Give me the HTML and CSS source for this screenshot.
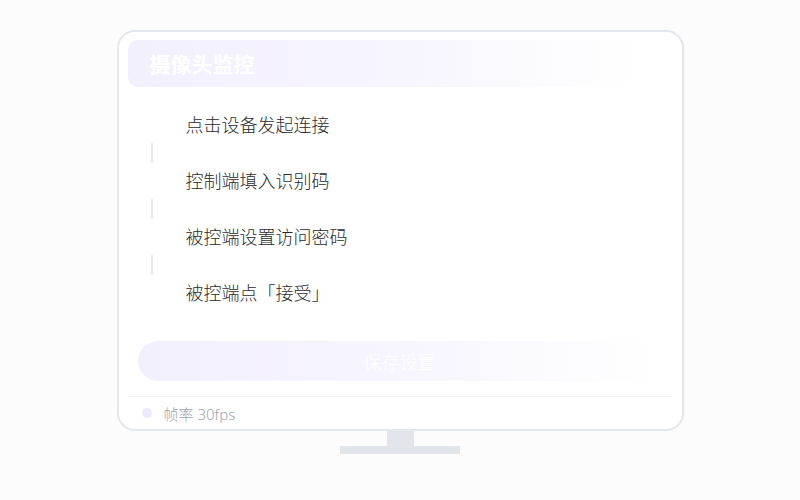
FILE: index.html
```html
<!DOCTYPE html>
<html lang="zh">
<head>
<meta charset="utf-8">
<link rel="stylesheet" href="styles.css">
</head>
<body>
<div class="stage">
  <div class="screen">
    <div class="header">摄像头监控</div>
    <div class="steps">
      <div class="step">点击设备发起连接</div>
      <div class="bar"></div>
      <div class="step">控制端填入识别码</div>
      <div class="bar"></div>
      <div class="step">被控端设置访问密码</div>
      <div class="bar"></div>
      <div class="step">被控端点「接受」</div>
    </div>
    <div class="btn">保存设置</div>
    <div class="footer"><span class="dot"></span><span class="fps">帧率 30fps</span></div>
  </div>
  <div class="neck"></div>
  <div class="base"></div>
</div>
</body>
</html>
```
FILE: styles.css
```css
html, body {
  margin: 0;
  padding: 0;
  background: #fcfcfd;
  font-family: "Noto Sans CJK SC", "Noto Sans", sans-serif;
}
.stage {
  width: 800px;
  height: 500px;
  display: flex;
  flex-direction: column;
  align-items: center;
  padding-top: 30px;
  box-sizing: border-box;
}
.screen {
  width: 567px;
  height: 401px;
  box-sizing: border-box;
  border: 2px solid #e4e7eb;
  border-radius: 18px;
  background: #ffffff;
  padding: 8px 10px 0 9px;
  display: flex;
  flex-direction: column;
}
.header {
  height: 47px;
  border-radius: 10px;
  background: linear-gradient(90deg, #f3f0fe 0%, #f6f4fe 45%, #ffffff 95%);
  color: #ffffff;
  font-size: 21px;
  font-weight: 700;
  line-height: 46px;
  padding-left: 22px;
}
.steps {
  margin-top: 20px;
  display: flex;
  flex-direction: column;
}
.step {
  height: 36px;
  line-height: 35px;
  font-size: 18px;
  font-weight: 300;
  color: #2b2b2b;
  padding-left: 58px;
}
.bar {
  width: 2px;
  height: 20px;
  margin-left: 23px;
  background: #e5e7eb;
}
.btn {
  margin: 30px 10px 0 10px;
  height: 40px;
  border-radius: 20px;
  background: linear-gradient(90deg, #f3f0fe 0%, #f6f4fe 45%, #ffffff 100%);
  color: #ffffff;
  font-size: 18px;
  font-weight: 300;
  line-height: 40px;
  text-align: center;
}
.footer {
  margin-top: 15px;
  border-top: 1px solid #eef0f3;
  height: 32px;
  display: flex;
  align-items: center;
  padding-left: 14px;
  gap: 12px;
}
.dot {
  width: 10px;
  height: 10px;
  border-radius: 50%;
  background: #ede9fe;
}
.fps {
  font-family: "Noto Sans", "Noto Sans CJK SC", sans-serif;
  font-size: 15px;
  font-weight: 300;
  color: #9ca3af;
}
.neck {
  width: 27px;
  height: 15px;
  background: #e2e5e9;
}
.base {
  width: 120px;
  height: 8px;
  background: #e2e5e9;
}
```
